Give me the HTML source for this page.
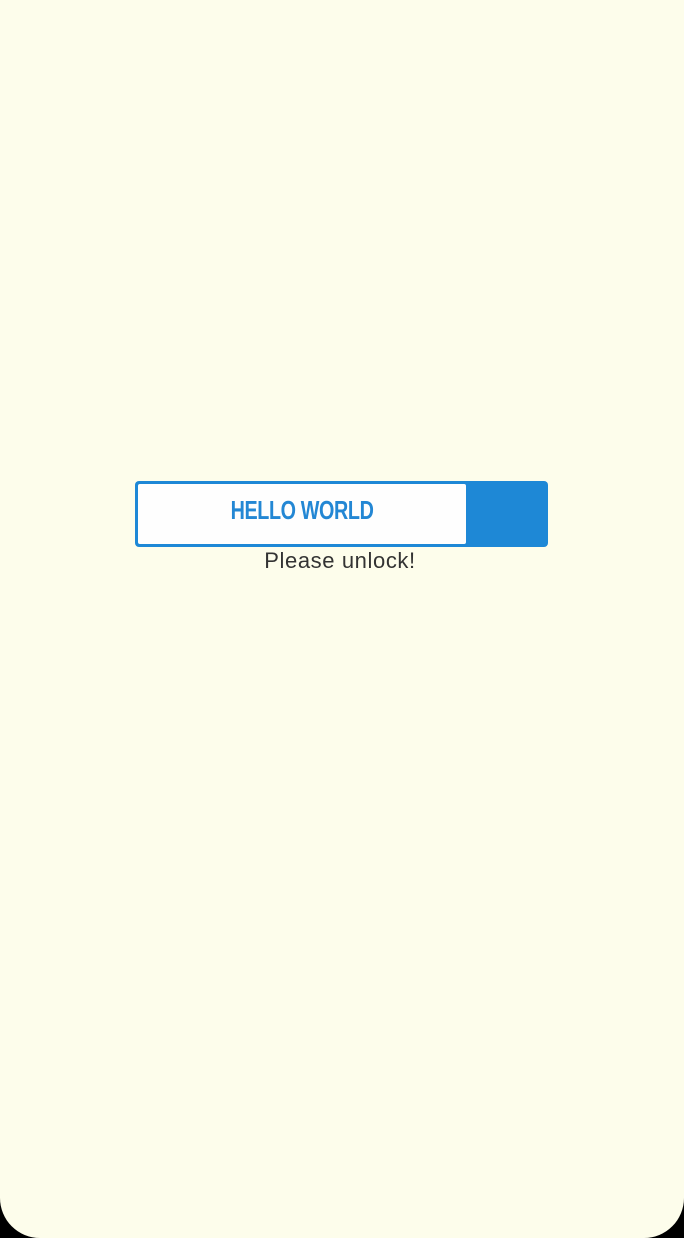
<!DOCTYPE html>
<html><head><style>
html,body{margin:0;padding:0;}
body{width:684px;height:1238px;background:#000;overflow:hidden;position:relative;font-family:"Liberation Sans",sans-serif;}
.bg{position:absolute;left:0;top:0;width:684px;height:1238px;background:#fdfdeb;border-radius:0 0 40px 40px;}
.box{position:absolute;left:135px;top:481px;width:413px;height:66px;background:#1e88d6;border-radius:4px;}
.inner{position:absolute;left:3px;top:3px;width:328px;height:60px;background:#fefefe;border-radius:2px;}
.t{position:absolute;left:0;width:334px;top:14px;text-align:center;color:#2387d4;font-weight:bold;font-size:26px;}
.t span{display:inline-block;transform:scaleX(0.76);letter-spacing:-0.5px;}
.p{position:absolute;left:0;width:684px;top:548px;text-align:center;font-size:22px;letter-spacing:0.6px;color:#333;}
</style></head><body>
<div class="bg"></div>
<div class="box"><div class="inner"></div><div class="t"><span>HELLO WORLD</span></div></div>
<div class="p" style="left:-2px">Please unlock!</div>
</body></html>
